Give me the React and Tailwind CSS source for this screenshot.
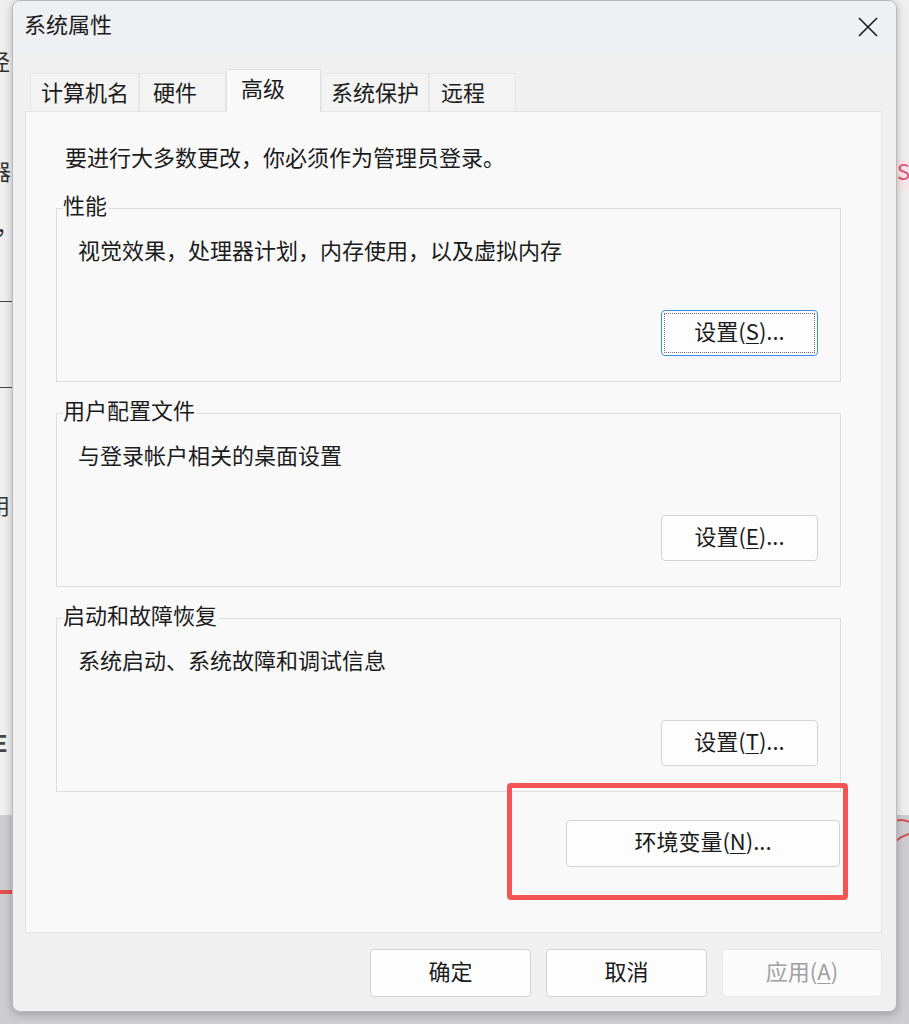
import React from "react";

const FONT = "font-['Noto_Sans_CJK_SC','Microsoft_YaHei',sans-serif]";

function Btn({ children, focused, disabled, className = "" }) {
  const tone = disabled
    ? "border-[#e8e8e8] bg-[#fbfbfb] text-[#a0a0a0]"
    : focused
    ? "border-[#3a8ee6] bg-[#fdfdfd] text-[#1b1b1b]"
    : "border-[#d3d3d3] bg-[#fdfdfd] text-[#1b1b1b]";
  return (
    <button className={`relative flex items-center justify-center rounded-[4px] border text-[22px] leading-none ${tone} ${className}`}>
      {focused && <span className="absolute inset-[2px] border border-dotted border-[#6b6b6b]" />}
      <span className="pb-[7px]">{children}</span>
    </button>
  );
}

const U = ({ children }) => <span className="underline underline-offset-[3px] decoration-1">{children}</span>;

function Group({ title, desc, button }) {
  return (
    <div className="relative ml-[30px] mr-[40px] flex h-[174px] flex-col border border-[#dedede]">
      <span className="absolute -top-[20px] left-[6px] bg-[#f9f9f9] pr-[2px] leading-[30px]">{title}</span>
      <p className="pl-[21px] pt-[25px] leading-[30px]">{desc}</p>
      <div className="mb-[25px] mr-[22px] mt-auto flex justify-end">{button}</div>
    </div>
  );
}

const tabs = [
  { label: "计算机名", w: "w-[109px] pl-[10px]" },
  { label: "硬件", w: "w-[87px] pl-[13px]" },
  { label: "高级", w: "w-[95px] pl-[14px]", active: true },
  { label: "系统保护", w: "w-[108px] pl-[9px]" },
  { label: "远程", w: "w-[87px] pl-[11px]" },
];

export default function App() {
  return (
    <div className={`relative h-[1024px] w-[909px] overflow-hidden bg-[#ececec] text-[22px] text-[#1b1b1b] ${FONT}`}>
      {/* page behind the dialog */}
      <div className="flex h-full flex-col">
        <div className="h-[815px] bg-[#efefef]" />
        <div className="flex-1 bg-[#cdcdd0]" />
      </div>
      <span className="absolute left-[-12px] top-[45px] text-[#333] leading-[30px]">径</span>
      <span className="absolute left-[-11px] top-[155px] text-[#333] leading-[30px]">器</span>
      <span className="absolute left-[-4px] top-[209px] text-[#333] leading-[30px]">，</span>
      <div className="absolute left-0 top-[301px] h-px w-[12px] bg-[#444]" />
      <div className="absolute left-0 top-[387px] h-px w-[12px] bg-[#444]" />
      <span className="absolute left-[-12px] top-[489px] text-[#333] leading-[30px]">用</span>
      <span className="absolute left-[-10px] top-[625px] text-[#333] leading-[30px]">」</span>
      <span className="absolute left-[-6px] top-[727px] font-bold text-[#444] leading-[30px]">E</span>
      <div className="absolute left-0 top-[890px] h-[4px] w-[12px] bg-[#e05050]" />
      <div className="absolute left-[897px] top-[160px] h-[30px] w-[12px] bg-[#f9e6ea]" />
      <span className="absolute left-[897px] top-[155px] text-[#e05572] leading-[30px]">S</span>
      <svg className="absolute left-[880px] top-[800px]" width="29" height="80" viewBox="0 0 29 80" fill="none">
        <path d="M2 30 C 10 20, 22 18, 29 22" stroke="#d85050" strokeWidth="2" />
        <path d="M4 55 C 12 42, 22 36, 29 34" stroke="#d85050" strokeWidth="2" />
      </svg>

      {/* dialog */}
      <div className="absolute left-[12px] top-0 flex h-[1012px] w-[885px] flex-col overflow-hidden rounded-[8px] border border-[#b9b9b9] bg-[#f0f0f0] shadow-[0_2px_8px_rgba(0,0,0,0.25)]">
        <div className="flex h-[53px] shrink-0 items-center justify-between bg-[#eff0f4] pl-[11px] pr-[18px]">
          <span className="relative -top-[5px] leading-[30px]">系统属性</span>
          <svg width="20" height="20" viewBox="0 0 20 20" className="relative -top-[1px]">
            <path d="M1 1 L19 19 M19 1 L1 19" stroke="#1b1b1b" strokeWidth="1.6" />
          </svg>
        </div>

        <div className="flex flex-1 flex-col pl-[12px] pr-[14px] pt-[15px]">
          <div className="flex h-[42px] items-end pl-[5px]">
            {tabs.map((t) => (
              <div
                key={t.label}
                className={
                  t.active
                    ? `relative z-10 -mb-px flex h-[43px] items-center border border-b-0 border-[#e0e0e0] bg-[#f9f9f9] pb-[9px] ${t.w}`
                    : `flex h-[38px] items-center border border-b-0 border-[#e6e6e6] bg-[#f3f3f3] pb-[4px] ${t.w}`
                }
              >
                <span className="leading-[30px]">{t.label}</span>
              </div>
            ))}
          </div>

          <div className="flex h-[822px] flex-col border border-[#e3e3e3] bg-[#f9f9f9]">
            <p className="pl-[39px] pt-[29px] leading-[30px]">要进行大多数更改，你必须作为管理员登录。</p>
            <div className="mt-[37px] flex flex-col gap-[31px]">
              <Group
                title="性能"
                desc="视觉效果，处理器计划，内存使用，以及虚拟内存"
                button={<Btn focused className="h-[46px] w-[157px]">设置(<U>S</U>)...</Btn>}
              />
              <Group
                title="用户配置文件"
                desc="与登录帐户相关的桌面设置"
                button={<Btn className="h-[46px] w-[157px]">设置(<U>E</U>)...</Btn>}
              />
              <Group
                title="启动和故障恢复"
                desc="系统启动、系统故障和调试信息"
                button={<Btn className="h-[46px] w-[157px]">设置(<U>T</U>)...</Btn>}
              />
            </div>
            <div className="mr-[41px] mt-[28px] flex justify-end">
              <Btn className="h-[47px] w-[274px]">环境变量(<U>N</U>)...</Btn>
            </div>
          </div>

          <div className="flex justify-end gap-[15px] pt-[16px]">
            <Btn className="h-[48px] w-[161px]">确定</Btn>
            <Btn className="h-[48px] w-[161px]">取消</Btn>
            <Btn disabled className="h-[48px] w-[160px]">应用(<U>A</U>)</Btn>
          </div>
        </div>
      </div>

      {/* annotation box */}
      <div className="absolute left-[507px] top-[783px] h-[117px] w-[341px] rounded-[4px] border-[5px] border-[#f55454]" />
    </div>
  );
}
